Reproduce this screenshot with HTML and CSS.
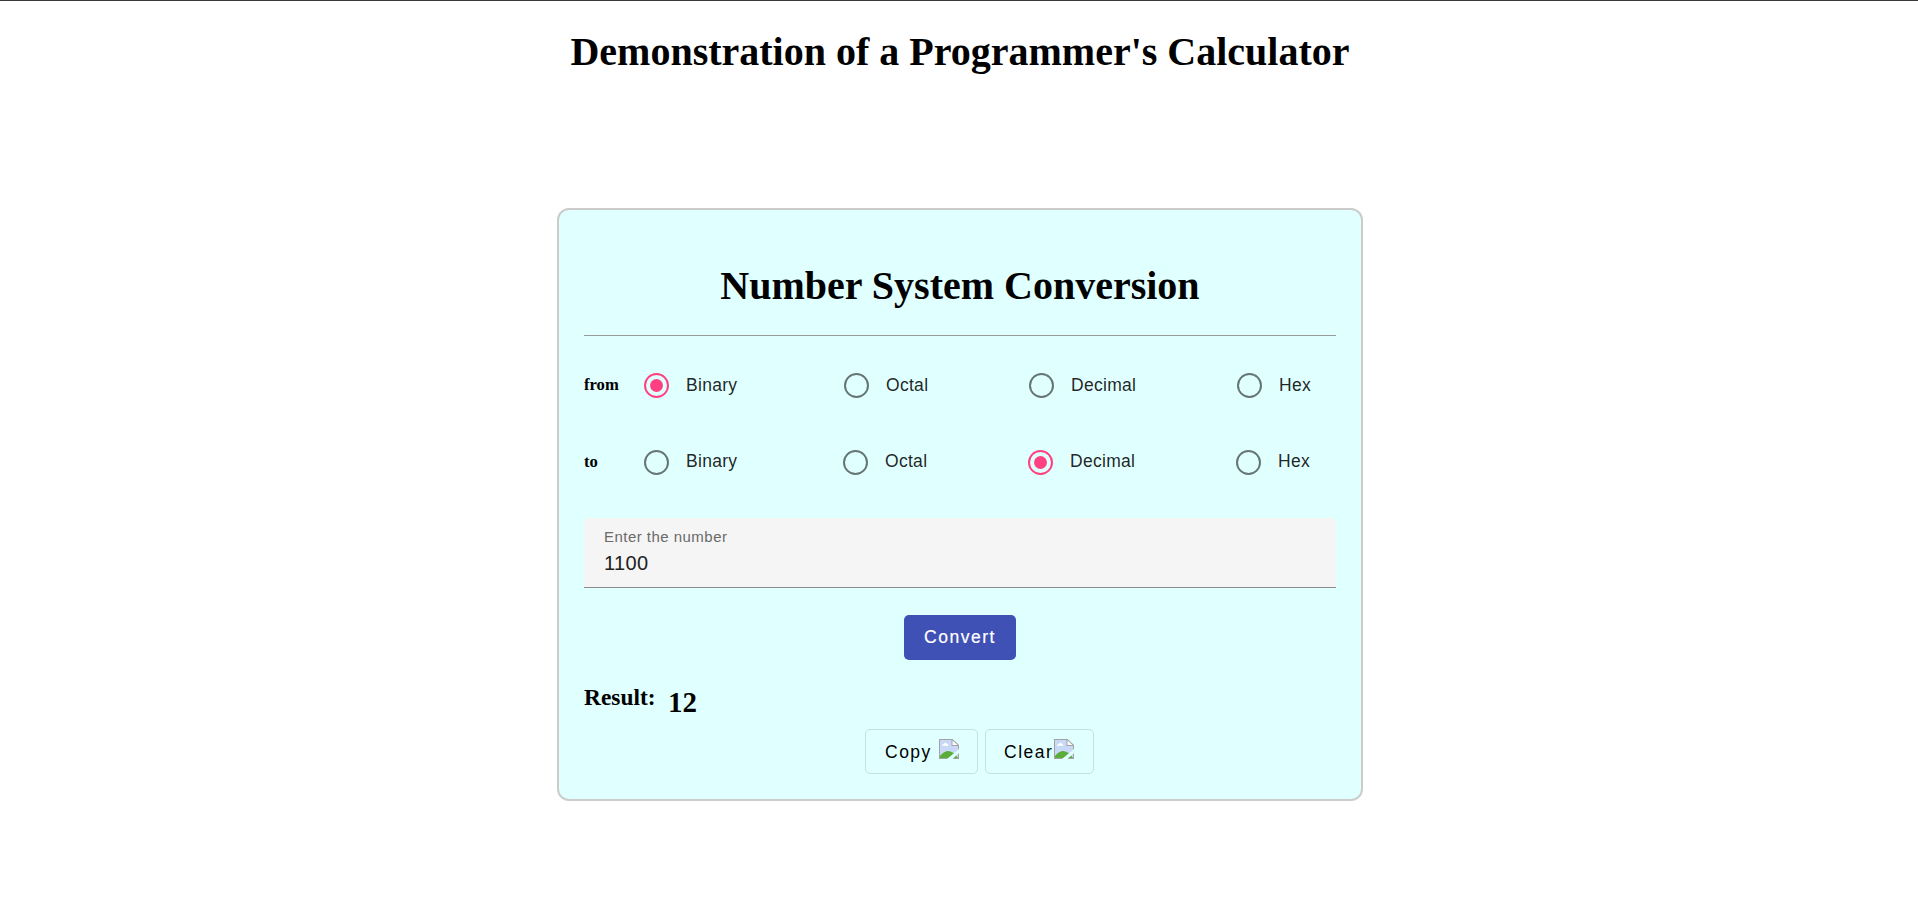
FILE: index.html
```html
<!DOCTYPE html>
<html lang="en">
<head>
<meta charset="utf-8">
<title>Programmer's Calculator</title>
<link rel="stylesheet" href="styles.css">
</head>
<body>
<svg width="0" height="0" class="defs">
  <symbol id="broken" viewBox="0 0 20 20">
    <path d="M0 0H13.500L20 6V20H0Z" fill="#a3a3a3"/>
    <path d="M1 1H12.500V7H19V19H1Z" fill="#c8d9f8"/>
    <path d="M13.500 1.500V6H18.500Z" fill="#fff"/>
    <path d="M3 6.800Q3 5 5 5Q6 3 7.500 4.500Q9.500 5 9.500 6.800Z" fill="#fff"/>
    <path d="M1 19V17Q5 12 9.500 12Q15 12.500 19 19Z" fill="#5aad38"/>
    <path d="M8 20L20 10V14L13.500 20Z" fill="#e0ffff"/>
  </symbol>
</svg>
<h1 class="title">Demonstration of a Programmer's Calculator</h1>
<main class="card">
  <h1 class="heading">Number System Conversion</h1>
  <hr class="rule">
  <div class="row">
    <h5 class="row-name">from</h5>
    <div class="options">
      <label class="option"><span class="radio checked"></span><span class="text">Binary</span></label>
      <label class="option"><span class="radio"></span><span class="text">Octal</span></label>
      <label class="option"><span class="radio"></span><span class="text">Decimal</span></label>
      <label class="option"><span class="radio"></span><span class="text">Hex</span></label>
    </div>
  </div>
  <div class="row row-to">
    <h5 class="row-name">to</h5>
    <div class="options">
      <label class="option"><span class="radio"></span><span class="text">Binary</span></label>
      <label class="option"><span class="radio"></span><span class="text">Octal</span></label>
      <label class="option"><span class="radio checked"></span><span class="text">Decimal</span></label>
      <label class="option"><span class="radio"></span><span class="text">Hex</span></label>
    </div>
  </div>
  <div class="field">
    <span class="field-label">Enter the number</span>
    <span class="field-value">1100</span>
  </div>
  <button class="btn convert">Convert</button>
  <div class="result">
    <h3 class="result-name">Result:</h3>
    <h2 class="result-value">12</h2>
  </div>
  <div class="actions">
    <button class="btn outline copy">Copy<svg class="img"><use href="#broken"/></svg></button>
    <button class="btn outline clear">Clear<svg class="img"><use href="#broken"/></svg></button>
  </div>
</main>
</body>
</html>
```
FILE: styles.css
```css
* { box-sizing: border-box; }
body {
  margin: 0;
  height: 909px;
  border-top: 1px solid #3a3a3a;
  background: #fff;
  color: #000;
  font-family: "Liberation Serif", "Times New Roman", serif;
  overflow: hidden;
}
h1, h2, h3, h5 { margin: 0; font-weight: 700; }
.defs { display: block; }
.title {
  padding: 28px 0 0 2px;
  font-size: 40px;
  line-height: 46px;
  text-align: center;
}
.card {
  width: 806px;
  height: 593px;
  margin: 133px 0 0 557px;
  padding: 53px 25px 0;
  border: 2px solid #ccc;
  border-radius: 12px;
  background: #e0ffff;
}
.heading {
  font-size: 40px;
  line-height: 46px;
  text-align: center;
}
.rule {
  height: 1px;
  margin: 26px 0 0;
  border: 0;
  background: #999;
}
.row {
  display: flex;
  align-items: center;
  height: 50px;
  margin-top: 24px;
}
.row-to { margin-top: 27px; }
.row-name {
  width: 60px;
  font-size: 16.6px;
  line-height: 20px;
}
.options {
  display: grid;
  grid-template-columns: 200px 185px 208px auto;
}
.row-to .options { grid-template-columns: 199px 185px 208px auto; }
.option {
  display: flex;
  align-items: center;
  gap: 17px;
  font: 17.5px/25px "Liberation Sans", Arial, sans-serif;
  letter-spacing: 0.3px;
  color: rgba(0, 0, 0, 0.87);
}
.row-to .text { margin-bottom: 2px; }
.radio {
  display: grid;
  place-items: center;
  width: 25px;
  height: 25px;
  border: 2px solid #667575;
  border-radius: 50%;
}
.checked { border-color: #ff4081; }
.checked::after {
  content: "";
  width: 13px;
  height: 13px;
  border-radius: 50%;
  background: #ff4081;
}
.field {
  display: flex;
  flex-direction: column;
  height: 70px;
  margin-top: 31px;
  padding: 9px 20px 0;
  border-radius: 5px 5px 0 0;
  background: linear-gradient(#8a8a8a, #8a8a8a) bottom / 100% 1px no-repeat #f5f5f5;
  font-family: "Liberation Sans", Arial, sans-serif;
}
.field-label {
  font-size: 15px;
  line-height: 20px;
  letter-spacing: 0.47px;
  color: #6a6a6a;
}
.field-value {
  margin-top: 4px;
  font-size: 20px;
  line-height: 24px;
  letter-spacing: 0.4px;
  color: #212121;
}
.btn {
  height: 45px;
  padding: 0;
  border: 0;
  border-radius: 5px;
  font: 17.5px/45px "Liberation Sans", Arial, sans-serif;
  letter-spacing: 1.5px;
}
.convert {
  display: block;
  width: 112px;
  margin: 27px auto 0;
  background: #3f51b5;
  color: #fff;
  -webkit-text-stroke: 0.2px #fff;
}
.result {
  display: flex;
  align-items: flex-start;
  height: 69px;
  padding-top: 24px;
}
.result-name {
  width: 84px;
  font-size: 23.4px;
  line-height: 26px;
}
.result-value {
  padding-top: 1px;
  font-size: 29px;
  line-height: 34px;
}
.actions {
  display: flex;
  gap: 7px;
  padding-left: 281px;
}
.outline {
  display: flex;
  align-items: flex-start;
  padding-left: 19px;
  border: 1px solid #c4e0e0;
  background: transparent;
  color: #000;
}
.copy { width: 113px; }
.clear { width: 109px; padding-left: 18px; }
.img { width: 20px; height: 20px; margin-top: 9px; }
.copy .img { margin-left: 7px; }
.clear .img { margin-left: 1px; }
```
